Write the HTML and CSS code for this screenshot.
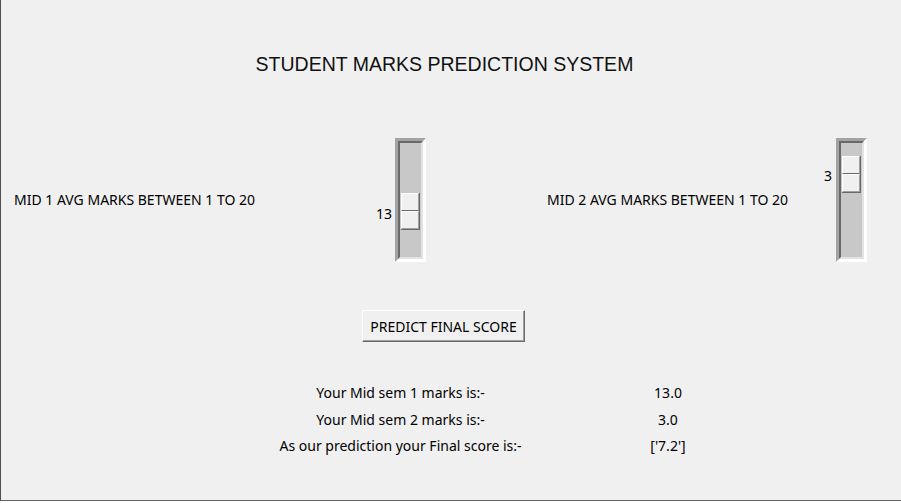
FILE: index.html
```html
<!DOCTYPE html>
<html lang="en">
<head>
  <meta charset="UTF-8">
  <title>Student Marks Prediction System</title>
  <meta name="viewport" content="width=device-width, initial-scale=1.0"/>
  <link rel="stylesheet" href="styles.css">
</head>
<body>
  <div class="window">
    <h1 class="title">STUDENT MARKS PREDICTION SYSTEM</h1>

    <div class="inputs">
      <div class="field-label mid1">MID 1 AVG MARKS BETWEEN 1 TO 20</div>
      <div class="scale-wrap wrap1">
        <span class="scale-value" style="margin-top:67px">13</span>
        <div class="scale">
          <div class="trough">
            <div class="slider" style="margin-top:50px"><span></span><span></span></div>
          </div>
        </div>
      </div>

      <div class="field-label mid2">MID 2 AVG MARKS BETWEEN 1 TO 20</div>
      <div class="scale-wrap wrap2">
        <span class="scale-value" style="margin-top:29px">3</span>
        <div class="scale">
          <div class="trough">
            <div class="slider" style="margin-top:13px"><span></span><span></span></div>
          </div>
        </div>
      </div>
    </div>

    <div class="actions">
      <button class="predict">PREDICT FINAL SCORE</button>
    </div>

    <div class="results">
      <span>Your Mid sem 1 marks is:-</span><span>13.0</span>
      <span>Your Mid sem 2 marks is:-</span><span>3.0</span>
      <span>As our prediction your Final score is:-</span><span>['7.2']</span>
    </div>
  </div>
</body>
</html>
```

FILE: styles.css
```css
* { box-sizing: border-box; }
body { margin: 0; background: #ffffff; font-family: "Noto Sans", "Open Sans", sans-serif; font-size: 14px; color: #000; }
.window { width: 901px; height: 501px; background: #f0f0f0; border-left: 1px solid #505050; border-bottom: 1px solid #646464; overflow: hidden; }

.title { margin: 0; padding: 53px 13px 0 0; font-family: "Liberation Sans", Arial, sans-serif; font-weight: normal; font-size: 19.5px; line-height: 23px; text-align: center; color: #111; }

.inputs { display: grid; grid-template-columns: 369px 56px 374px 67px; height: 124px; margin-top: 62px; }
.field-label { display: flex; align-items: center; line-height: 18px; }
.mid1 { padding-left: 13px; }
.mid2 { padding-left: 121px; }

.scale-wrap { display: flex; justify-content: flex-end; align-items: flex-start; }
.scale-value { line-height: 18px; margin-right: 3px; }
.wrap2 .scale-value { margin-right: 4px; }

.scale { width: 31px; height: 124px; border: 3px solid; border-color: #a3a3a3 #ffffff #ffffff #a3a3a3; }
.trough { height: 100%; border: 2px solid; border-color: #696969 #e3e3e3 #e3e3e3 #696969; background: #c8c8c8; padding-left: 1px; }
.slider { width: 19px; height: 37px; display: flex; flex-direction: column; border-right: 1px solid #696969; border-bottom: 1px solid #696969; }
.slider span { flex: 1; background: #f0f0f0; border: 1px solid; border-color: #ffffff #a0a0a0 #a0a0a0 #ffffff; }
.slider span:first-child { border-bottom: 1px solid #696969; }

.actions { display: flex; justify-content: center; padding-right: 15px; margin-top: 48px; }
.predict { width: 163px; height: 32px; padding: 0; font-family: inherit; font-size: 14px; color: #000; background: #f0f0f0; border: 1px solid; border-color: #ffffff #696969 #696969 #ffffff; box-shadow: inset -1px -1px 0 #a0a0a0; }

.results { display: grid; grid-template-columns: 301px 234px; grid-auto-rows: 26.5px; align-items: center; margin: 38px 0 0 249px; text-align: center; line-height: 18px; }
```
